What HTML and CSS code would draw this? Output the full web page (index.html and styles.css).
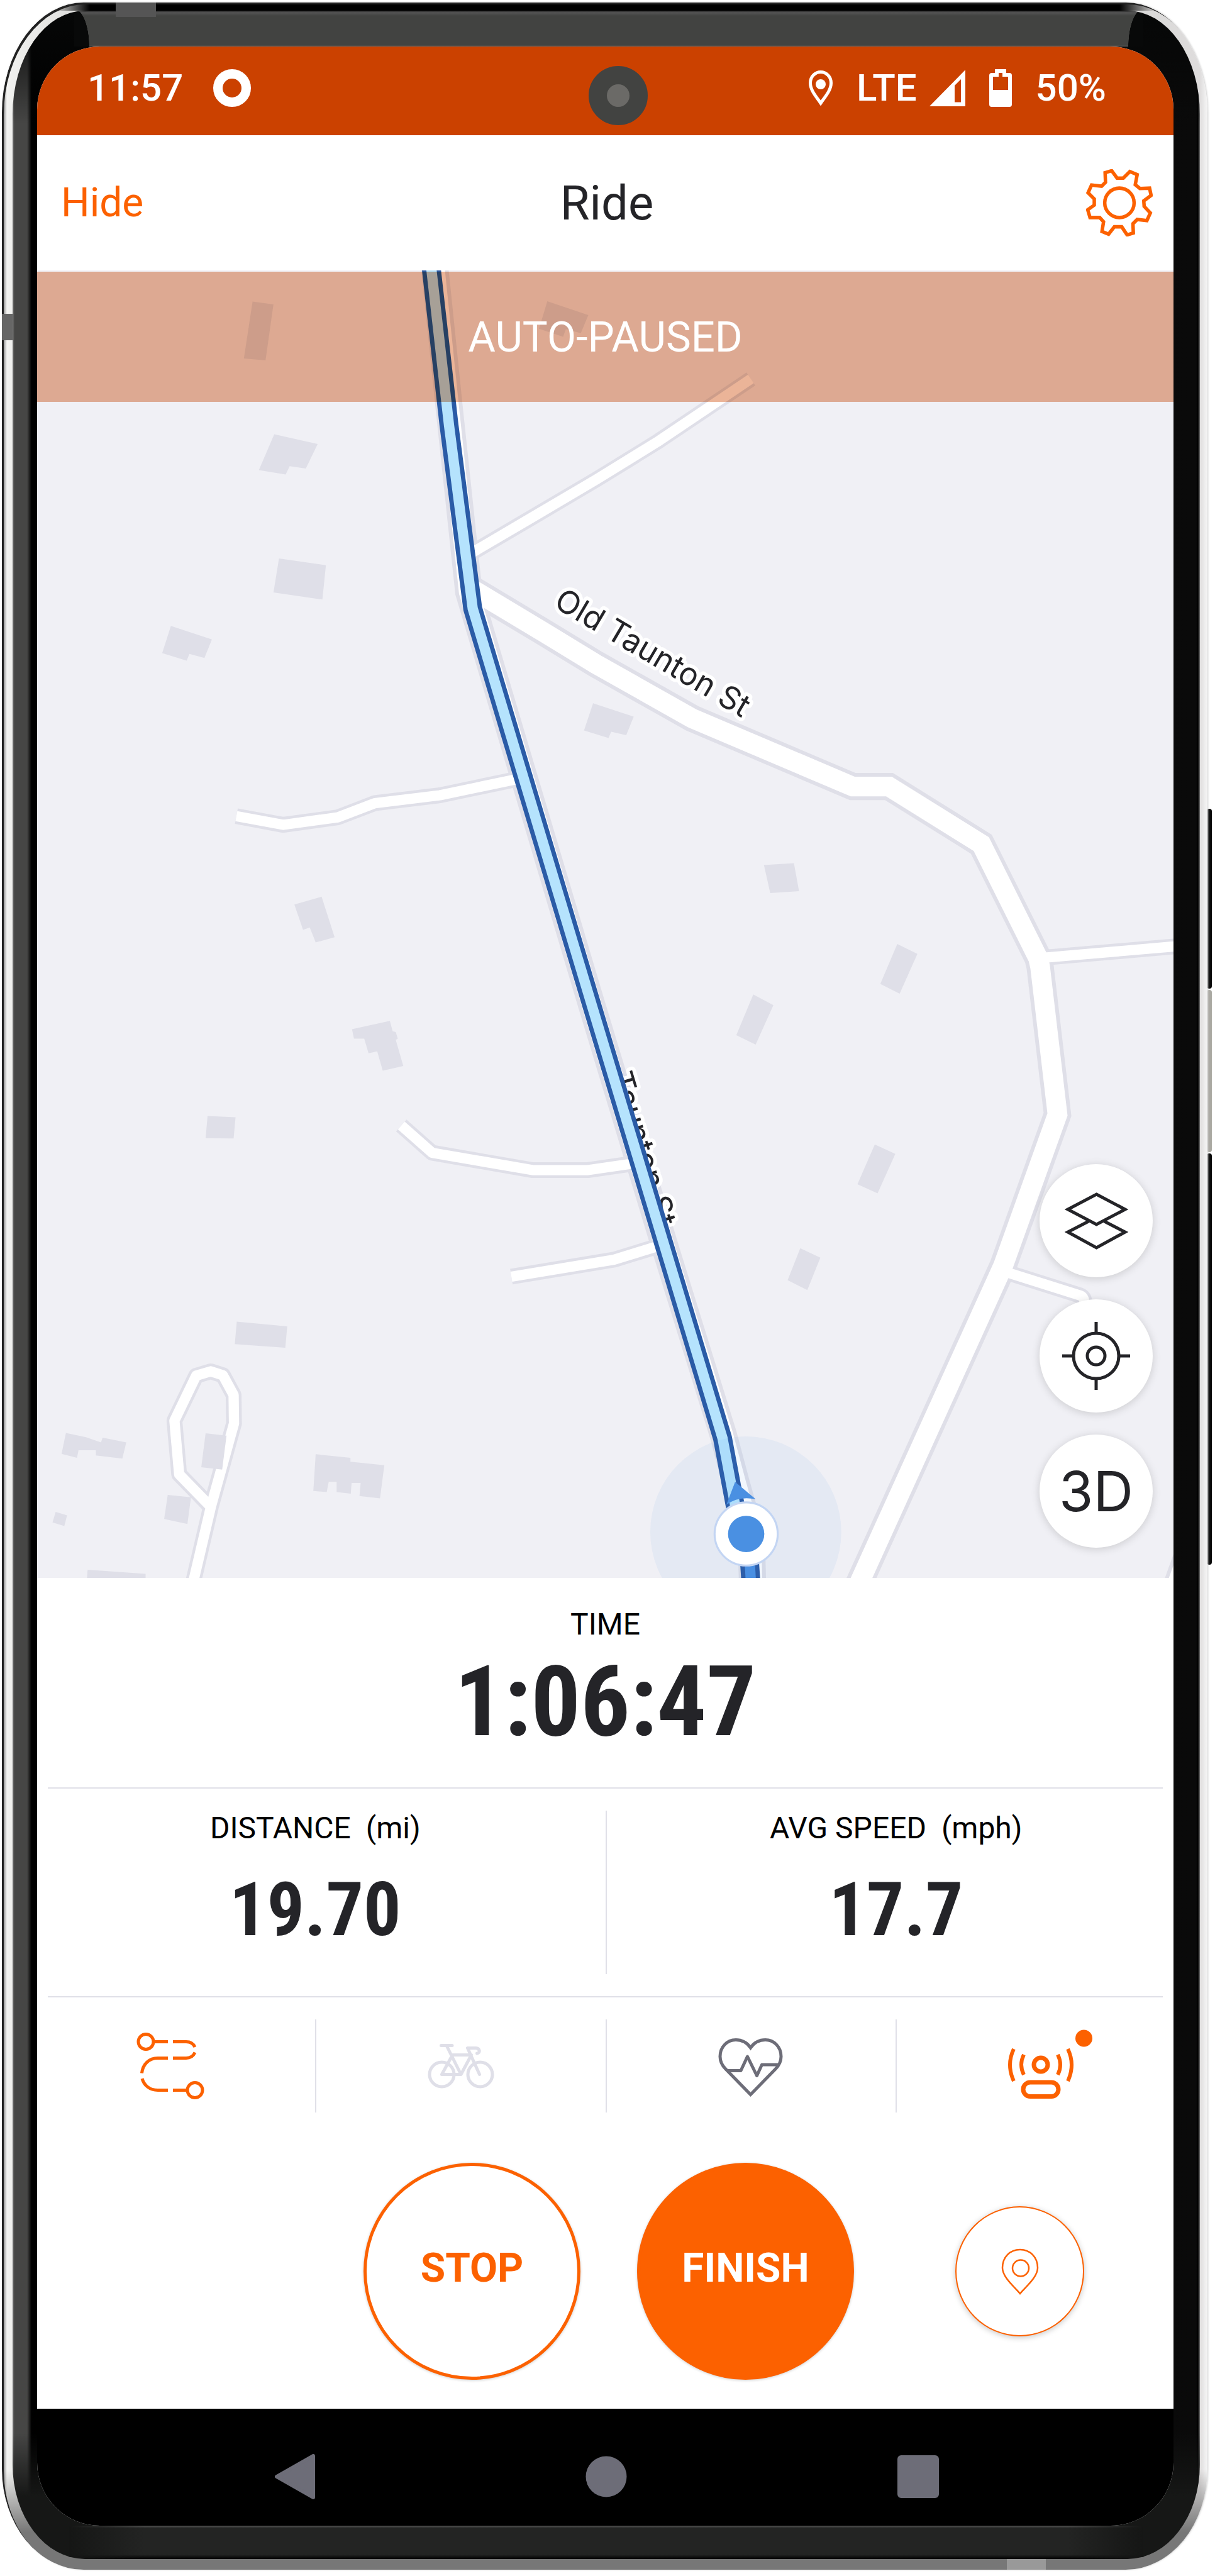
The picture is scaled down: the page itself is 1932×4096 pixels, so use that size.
FILE: index.html
```html
<!DOCTYPE html>
<html lang="en">
<head>
<meta charset="utf-8">
<meta name="viewport" content="width=device-width, initial-scale=1">
<title>Ride</title>
<link rel="stylesheet" href="styles.css">
</head>
<body>
<div class="device">
  <span class="side-key side-key-power"></span>
  <span class="side-key side-key-gap"></span>
  <span class="side-key side-key-volume"></span>
  <div class="phone">
    <span class="antenna antenna-top"></span>
    <span class="antenna antenna-left"></span>
    <span class="antenna antenna-bottom"></span>
    <div class="bezel">
      <div class="screen">
        <div class="status">
          <div class="status-group status-left">
            <span>11:57</span>
            <span class="record"></span>
          </div>
          <span class="camera"></span>
          <div class="status-group status-right">
            <svg width="38" height="56" viewBox="0 0 38 56"><path d="M19 52C13 43 2.500 32 2.500 20C2.500 10 10 2.500 19 2.500S35.500 10 35.500 20C35.500 32 25 43 19 52Z" fill="none" stroke="#fff" stroke-width="5"/><circle cx="19" cy="22" r="8" fill="#fff"/></svg>
            <span class="network">LTE
              <svg width="57" height="58" viewBox="0 0 57 58"><path fill="#fff" fill-rule="evenodd" d="M57 0V58H0ZM40 25V51.500H50V15Z"/></svg>
            </span>
            <svg width="36" height="60" viewBox="0 0 36 60"><path fill="#fff" fill-rule="evenodd" d="M9 0H27V6H32Q36 6 36 10V56Q36 60 32 60H4Q0 60 0 56V10Q0 6 4 6H9ZM6 12V33H30V12H21V6H15V12Z"/></svg>
            <span>50%</span>
          </div>
        </div>

        <header class="header">
          <a class="hide" href="#">Hide</a>
          <h1 class="title">Ride</h1>
          <button class="icon-button settings" type="button" aria-label="Settings">
            <svg width="106" height="107" viewBox="0 0 172 174" fill="none" stroke="#fc6100" stroke-width="9"><path d="M49 9L66 4L80 23H96L113 6L132 14L127 40L139 50L164 49L168 68L149 82L150 96L166 113L157 133L132 130L121 141L122 165L106 170L92 149H73L58 168L41 161L45 136L35 125H10L4 105L21 93V77L5 61L14 41L40 44L50 34Z"/><circle cx="86" cy="87" r="38"/></svg>
          </button>
        </header>

        <main>
          <section class="map" aria-label="Map">
            <svg class="map-canvas" viewBox="94 -295 2880 3314">
              <g fill="#dfdfe8">
                <path d="M640 -216L693 -209L673 -67L618 -72Z"/>
                <path d="M1387 -217L1491 -182L1472 -136L1434 -146L1427 -127L1366 -147Z"/>
                <path d="M695 120L805 145L775 207L734 201L724 222L656 211Z"/>
                <path d="M707 435L826 452L817 539L693 521Z"/>
                <path d="M433 606L537 640L518 687L480 677L473 694L411 675Z"/>
                <path d="M1503 802L1606 836L1587 883L1549 874L1542 890L1480 871Z"/>
                <path d="M746 1312L815 1292L848 1395L800 1408L785 1370L768 1376Z"/>
                <path d="M1936 1212L2012 1207L2025 1278L1952 1283Z"/>
                <path d="M2274 1412L2325 1437L2280 1538L2231 1513Z"/>
                <path d="M1909 1540L1960 1567L1915 1667L1866 1643Z"/>
                <path d="M2217 1920L2269 1944L2224 2044L2173 2021Z"/>
                <path d="M2028 2183L2079 2207L2046 2289L1996 2264Z"/>
                <path d="M892 1628L988 1607L995 1633L1003 1635L1008 1652L1003 1655L1022 1721L970 1733L956 1684L934 1689L923 1652H897Z"/>
                <path d="M526 1848L597 1851L592 1905L521 1904Z"/>
                <path d="M600 2369L728 2381L723 2435L595 2426Z"/>
                <path d="M167 2651L218 2662L256 2675L260 2663L320 2675L310 2716L243 2708V2695H199L195 2714L156 2704Z"/>
                <path d="M425 2808L484 2814L475 2882L416 2869Z"/>
                <path d="M141 2851L170 2860L163 2887L133 2878Z"/>
                <path d="M800 2705L888 2714V2724L974 2733L963 2817L911 2811L914 2778H891L889 2805L853 2801V2775H833L828 2801L794 2798Z"/>
                <path d="M222 2998L369 3008V3025H220Z"/>
              </g>
              <defs>
                <g id="lanes" fill="none" stroke-linejoin="round">
                  <path d="M599 1088L718 1110L856 1091L950 1055L1115 1035L1330 990"/>
                  <path d="M1190 424L1350 330L1511 235L1665 140L1903 -20"/>
                  <path d="M2631 1448L2990 1417"/>
                  <path d="M1017 1872L1095 1941L1350 1985H1490L1600 1969"/>
                  <path d="M1296 2255L1556 2212L1660 2180"/>
                  <path d="M487 3040L535 2836L593 2627L592 2555L565 2505L534 2495L497 2506L442 2620L454 2756L532 2836"/>
                  <path d="M2555 2245L2738 2303Q2750 2308 2748 2330"/>
                </g>
                <g id="streets" fill="none" stroke-linejoin="miter">
                  <path d="M1200 515L1370 617L1511 703L1754 840L2161 1013H2253L2487 1159L2631 1448L2636 1470L2680 1844L2542 2228L2160 3070"/>
                  <path d="M1102 -300L1138 50L1188 520L1500 1568L1689 2192L1833 2656L1866 2780L1904 2914L1907 3030"/>
                  <path d="M2974 3060L3010 2960"/>
                </g>
              </defs>
              <use href="#lanes" stroke="#dfdfe8" stroke-width="40"/>
              <use href="#streets" stroke="#dfdfe8" stroke-width="69"/>
              <use href="#lanes" stroke="#fff" stroke-width="26"/>
              <use href="#streets" stroke="#fff" stroke-width="50"/>
              <path fill="#dfdfe8" d="M521 2652L574 2658L563 2744L510 2738Z"/>
              <g class="street-name">
                <text transform="translate(1400 556) rotate(30.500)">Old Taunton St</text>
                <text transform="translate(1545 1745) rotate(73.200)">Taunton St</text>
              </g>
              <g fill="none" stroke-linejoin="round">
                <path d="M1093 -300L1138 98L1198 562L1500 1568L1831 2664L1866 2850L1897 2940L1903 3030" stroke="#2a5ba6" stroke-width="48"/>
                <path d="M1093 -300L1138 98L1198 562L1500 1568L1831 2664L1866 2850" stroke="#b5e3fd" stroke-width="26"/>
                <path d="M1897 2920L1903 3030" stroke="#4a90e2" stroke-width="26"/>
              </g>
              <circle cx="1890" cy="2902" r="242" fill="#4a90e2" opacity=".07"/>
              <path d="M1863 2775L1915 2819Q1872 2810 1841 2833Z" fill="#4a90e2"/>
              <circle cx="1891" cy="2907" r="80" fill="#fff" stroke="#c3d5f3" stroke-width="5"/>
              <circle cx="1891" cy="2907" r="46" fill="#4a90e2"/>
            </svg>
            <div class="banner"><span class="banner-text">AUTO-PAUSED</span></div>
            <div class="map-controls">
              <button class="map-button" type="button" aria-label="Map layers">
                <svg width="103" height="93" viewBox="0 0 103 93" fill="none" stroke="#242428" stroke-width="5"><path d="M51.500 4L97 28L51.500 52L6 28Z"/><path d="M39 47L6 64L51.500 89L97 64L64 47"/></svg>
              </button>
              <button class="map-button" type="button" aria-label="Center on my location">
                <svg width="108" height="108" viewBox="0 0 108 108" fill="none" stroke="#242428" stroke-width="5"><circle cx="54" cy="54" r="36"/><circle cx="54" cy="54" r="14"/><path d="M54 0V18M54 90V108M0 54H18M90 54H108"/></svg>
              </button>
              <button class="map-button" type="button">3D</button>
            </div>
          </section>

          <section class="time">
            <h2 class="label">TIME</h2>
            <p class="clock">1:06:47</p>
          </section>
          <section class="stats">
            <div class="stat">
              <h2 class="label">DISTANCE <span class="unit">(mi)</span></h2>
              <p class="value">19.70</p>
            </div>
            <div class="stat">
              <h2 class="label">AVG SPEED <span class="unit">(mph)</span></h2>
              <p class="value">17.7</p>
            </div>
          </section>
          <section class="tools">
            <button class="icon-button tool" type="button" aria-label="Routes">
              <svg class="tool-icon" viewBox="0 0 108 108" fill="none" stroke="#fc6100" stroke-width="5"><circle cx="15" cy="15.500" r="12"/><circle cx="93" cy="92.500" r="12"/><path d="M28 15.500H50M58 15.500H79Q89 15.500 93 24M93 32.500Q89 41.500 79 41.500H58M50 41.500H34C20 41.500 10 51 8.500 65.500M9 74C12 85 21 92.500 34 92.500H50M58 92.500H80"/></svg>
            </button>
            <button class="icon-button tool" type="button" aria-label="Sport">
              <svg class="tool-icon" viewBox="0 0 108 108" fill="none" stroke="#dfdfe8" stroke-width="5" stroke-linecap="round" stroke-linejoin="round"><circle cx="23.500" cy="67.500" r="19.500"/><circle cx="84.500" cy="67.500" r="19.500"/><path d="M22.500 21.500H40M31 21.500L54 67.500H23.500L40.500 36.500H70.500L54 67.500M83.500 67.500L64.500 25.500H77C84 25.500 85.500 33 79.500 34"/></svg>
            </button>
            <button class="icon-button tool" type="button" aria-label="Heart rate">
              <svg class="tool-icon" viewBox="0 0 108 108" fill="none" stroke="#6d6d78" stroke-width="5"><path d="M53.500 99.500L14 59C8 53 5 46 5 39C5 24 16 12.500 30 12.500C40 12.500 48 17 53.500 25C59 17 67 12.500 77 12.500C91 12.500 102 24 102 39C102 46 99 53 93 59Z"/><path stroke-linejoin="round" d="M16 61.500H38L48.500 39L63.500 69.500L71.500 52H99"/></svg>
            </button>
            <button class="icon-button tool" type="button" aria-label="Beacon">
              <svg class="tool-icon" viewBox="0 0 108 108" fill="none" stroke="#fc6100" stroke-width="7"><circle cx="54" cy="52" r="11"/><rect x="26" y="80" width="56" height="22.500" rx="11.250"/><path stroke-width="6" d="M27 36Q19 52 27 68M81 36Q89 52 81 68M11 27Q-1 52 11 78M97 27Q109 52 97 78"/><circle cx="122.500" cy="10" r="13.500" fill="#fc6100" stroke="none"/></svg>
            </button>
          </section>
          <section class="actions">
            <button class="round stop" type="button">STOP</button>
            <button class="round finish" type="button">FINISH</button>
            <button class="round pin" type="button" aria-label="Add a marker">
              <svg width="60" height="74" viewBox="0 0 60 74" fill="none" stroke="#fc6100" stroke-width="2.500"><path d="M30 72C22 62 2 46 2 31C2 14 14 2 30 2S58 14 58 31C58 46 38 62 30 72Z"/><circle cx="31" cy="31.500" r="13"/></svg>
            </button>
          </section>
        </main>

        <nav class="navbar" aria-label="System">
          <button class="icon-button" type="button" aria-label="Back"><svg width="64" height="72" viewBox="0 0 64 72"><path fill="#6d6d78" stroke="#6d6d78" stroke-width="6" stroke-linejoin="round" d="M3 36L61 3V69Z"/></svg></button>
          <button class="icon-button" type="button" aria-label="Home"><svg width="66" height="66" viewBox="0 0 66 66"><circle cx="33" cy="33" r="32.500" fill="#6d6d78"/></svg></button>
          <button class="icon-button" type="button" aria-label="Recent apps"><svg width="66" height="68" viewBox="0 0 66 68"><rect width="66" height="68" rx="6" fill="#6d6d78"/></svg></button>
        </nav>
      </div>
    </div>
  </div>
</div>
</body>
</html>
```
FILE: styles.css
```css
* { box-sizing: border-box; }

body {
  margin: 0;
  background: #fff;
  color: #242428;
  font-family: Roboto, "Liberation Sans", sans-serif;
}

h1, h2, p { margin: 0; font-weight: 400; }

button { font-family: inherit; padding: 0; border: 0; background: none; color: inherit; }

svg { display: block; }

/* Phone body */
.device { position: relative; padding: 4px 12px 9px 3px; }

.phone {
  position: relative;
  padding: 13px 12px 17px 17px;
  border-radius: 130px 130px 130px 130px / 175px 175px 160px 160px;
  background:
    linear-gradient(to right, transparent, #000 60px, #000 calc(100% - 60px), transparent) center top / calc(100% - 160px) 13px no-repeat,
    linear-gradient(to right, transparent, #777 60px, #777 calc(100% - 60px), transparent) center bottom / calc(100% - 120px) 18px no-repeat,
    linear-gradient(transparent calc(100% - 160px), #777 calc(100% - 60px)),
    linear-gradient(to right, #444 0, #aaa 4px, #f4f4f2 8px, #f0f0ee 14px, #d8d8d6 160px, #d8d8d6 calc(100% - 160px), #dedcdc calc(100% - 12px), #f6f6f6 100%);
  box-shadow: inset 3px 3px 0 0 #222, 1px 0 3px #ccc;
}

.bezel {
  padding: 57px 42px 53px 39px;
  border-radius: 115px 115px 115px 115px / 165px 165px 150px 150px;
  background:
    radial-gradient(ellipse 24px 60px at 0 100%, #080909 98%, transparent) 98px 0 / 24px 57px no-repeat,
    radial-gradient(ellipse 24px 60px at 100% 100%, #080909 98%, transparent) calc(100% - 90px) 0 / 24px 57px no-repeat,
    linear-gradient(#222, #555 3px, #424341 8px, #424341 55px, #666) 98px top / calc(100% - 188px) 57px no-repeat,
    linear-gradient(to right, #151615, transparent 120px, transparent calc(100% - 120px), #151615) center bottom / calc(100% - 180px) 53px no-repeat,
    linear-gradient(#555, #232423 4px, #232423 46px, #000) center bottom / calc(100% - 180px) 53px no-repeat,
    linear-gradient(#060707, transparent 180px, transparent calc(100% - 200px), #161716 calc(100% - 100px)),
    linear-gradient(to right, #777 0, #464645 3px, #464645 23px, #000 30px, #0a0a0a calc(100% - 6px), #000 calc(100% - 3px), #777 100%);
}

.antenna { position: absolute; background: #555; }
.antenna-top { top: 0; left: 181px; width: 64px; height: 23px; z-index: 1; }
.antenna-left { top: 495px; left: 0; width: 17px; height: 42px; background: #666; }
.antenna-bottom { bottom: 0; right: 257px; width: 62px; height: 17px; background: #999; }

.side-key { position: absolute; right: 5px; width: 8px; border-radius: 4px; background: #0a0a0a; }
.side-key-power { top: 1286px; height: 286px; }
.side-key-gap { top: 1574px; height: 258px; background: #aaa9a2; }
.side-key-volume { top: 1834px; height: 654px; }

.screen { overflow: hidden; border-radius: 100px; background: #fff; }

/* Status bar */
.status {
  position: relative;
  display: flex;
  align-items: center;
  justify-content: space-between;
  height: 141px;
  padding: 0 107px 9px 80px;
  background: #cb4100;
  color: #fff;
  font-size: 60px;
  font-weight: 500;
  line-height: 64px;
}
.status-group { display: flex; align-items: center; }
.status-left { gap: 48px; }
.status-right { gap: 38px; }
.network { display: flex; align-items: center; gap: 20px; }
.record { width: 60px; height: 60px; border: 15px solid #fff; border-radius: 50%; }
.camera {
  position: absolute;
  top: 31px;
  left: calc(50% - 27px);
  width: 94px;
  height: 94px;
  border: 29px solid #424341;
  border-radius: 50%;
  background: #6b6a67;
}

/* App header */
.header {
  display: grid;
  grid-template-columns: 1fr auto 1fr;
  align-items: center;
  height: 215px;
  padding: 0 33px 0 38px;
}
.hide { color: #fc6100; font-size: 64px; text-decoration: none; }
.title { font-size: 76px; }
.settings { justify-self: end; }

/* Map */
.map { position: relative; isolation: isolate; background: #f0f0f5; }
.map-canvas { width: 100%; height: auto; }
.street-name {
  font-family: Inter, "Liberation Sans", sans-serif;
  font-size: 80px;
  fill: #242428;
  stroke: #fff;
  stroke-width: 18px;
  stroke-linejoin: round;
  paint-order: stroke;
}
.banner {
  position: absolute;
  top: 2px;
  left: 0;
  right: 0;
  display: grid;
  place-items: center;
  height: 207px;
  color: #fff;
  font-size: 67px;
}
.banner::before { content: ""; position: absolute; inset: 0; background: #ebb498; mix-blend-mode: multiply; }
.banner-text { position: relative; }
.map-controls { position: absolute; right: 33px; bottom: 48px; display: grid; gap: 35px; }
.map-button {
  display: grid;
  place-items: center;
  width: 180px;
  height: 180px;
  border-radius: 50%;
  background: #fff;
  box-shadow: 0 2px 14px rgba(0, 0, 0, .16);
  font-family: Inter, "Liberation Sans", sans-serif;
  font-size: 88px;
}

/* Readings */
.label { color: #000; font-size: 48px; line-height: 56px; text-align: center; }
.unit { margin-left: 12px; }
.clock, .value {
  font-family: "Roboto Condensed", Roboto, sans-serif;
  font-weight: 700;
  text-align: center;
}
.clock { font-size: 156px; line-height: 164px; }
.value { font-size: 118px; line-height: 124px; }

.time {
  display: grid;
  gap: 13px;
  margin: 0 17px;
  padding: 46px 0 54px;
  border-bottom: 2px solid #e0e0e8;
}
.stats {
  display: grid;
  grid-template-columns: 1fr 1fr;
  padding: 35px 0;
  margin: 0 -19px;
}
.stat { display: grid; gap: 40px; align-content: start; height: 260px; }
.stat + .stat { border-left: 2px solid #e0e0e8; }

.tools {
  position: relative;
  display: grid;
  grid-template-columns: repeat(4, 1fr);
  margin: 0 -19px;
  padding-top: 37px;
}
.tools::before { content: ""; position: absolute; top: 0; left: 36px; right: 36px; height: 2px; background: #e0e0e8; }
.tool { display: grid; place-items: center; height: 148px; }
.tool + .tool { border-left: 2px solid #e0e0e8; }
.tool-icon { width: 108px; height: 108px; overflow: visible; }

/* Recording controls */
.actions {
  display: flex;
  align-items: center;
  justify-content: flex-end;
  gap: 90px;
  padding: 80px 142px 46px 0;
}
.round {
  display: grid;
  place-items: center;
  width: 345px;
  height: 345px;
  padding-bottom: 10px;
  border: 5px solid #fc6100;
  border-radius: 50%;
  background: #fff;
  color: #fc6100;
  font-size: 64px;
  font-weight: 700;
  box-shadow: 0 1px 4px rgba(0, 0, 0, .2);
}
.finish { background: #fc6100; color: #fff; }
.pin {
  width: 205px;
  height: 207px;
  margin-left: 71px;
  padding: 0;
  border-width: 2px;
  box-shadow: 0 2px 10px rgba(0, 0, 0, .22);
}

/* System navigation */
.navbar {
  display: grid;
  grid-template-columns: repeat(3, 1fr);
  place-items: center;
  height: 186px;
  padding: 72px 158px 0 162px;
  background: #000;
  align-content: start;
}
```
